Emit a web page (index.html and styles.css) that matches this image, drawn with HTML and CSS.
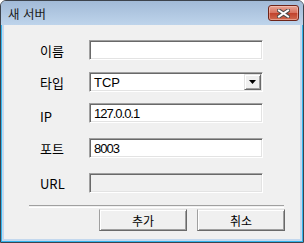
FILE: index.html
```html
<!DOCTYPE html>
<html lang="ko">
<head>
    <meta charset="UTF-8">
    <title>새 서버</title>
    <link rel="stylesheet" href="styles.css">
</head>
<body>

    <!-- Dialog window -->
    <div class="window">
        <div class="titlebar">
            <span class="title">새 서버</span>
            <button class="close-btn">
                <svg width="13" height="9" viewBox="0 0 13 9">
                    <path d="M2 1.5 L11 7.5 M11 1.5 L2 7.5" stroke="#4a4a4a" stroke-width="4" stroke-linecap="square"/>
                    <path d="M2 1.5 L11 7.5 M11 1.5 L2 7.5" stroke="#ffffff" stroke-width="2" stroke-linecap="square"/>
                </svg>
            </button>
        </div>

        <div class="frame">
            <div class="client">
                <div class="form">
                    <div class="row">
                        <label class="label">이름</label>
                        <input class="field" type="text" value="">
                    </div>
                    <div class="row row-type">
                        <label class="label">타입</label>
                        <div class="field select">
                            <span class="select-value">TCP</span>
                            <span class="select-btn">
                                <svg width="7" height="4" viewBox="0 0 7 4"><path d="M0 0 H7 L3.5 4 Z" fill="#000"/></svg>
                            </span>
                        </div>
                    </div>
                    <div class="row row-ip">
                        <label class="label label-low">IP</label>
                        <input class="field num" type="text" value="127.0.0.1">
                    </div>
                    <div class="row row-port">
                        <label class="label">포트</label>
                        <input class="field num" type="text" value="8003">
                    </div>
                    <div class="row row-url">
                        <label class="label">URL</label>
                        <input class="field disabled" type="text" value="" disabled>
                    </div>
                </div>

                <div class="separator"></div>

                <div class="buttons">
                    <button class="btn">추가</button>
                    <button class="btn">취소</button>
                </div>
            </div>
        </div>
    </div>

</body>
</html>
```

FILE: styles.css
```css
body {
    margin: 0;
    padding: 0;
    font-family: "Noto Sans CJK KR", "Liberation Sans", sans-serif;
    font-size: 12px;
    color: #000;
}

/* Window frame */
.window {
    width: 304px;
    height: 243px;
    box-sizing: border-box;
    border: 1px solid #3d434c;
    border-radius: 6px 6px 0 0;
    background: #bdd3ea;
    display: flex;
    flex-direction: column;
    overflow: hidden;
}

.titlebar {
    height: 24px;
    flex-shrink: 0;
    display: flex;
    align-items: flex-start;
    justify-content: space-between;
    padding: 0 4px 0 7px;
    background: linear-gradient(#a2bad7, #bed4eb);
}

.title {
    line-height: 26px;
    font-size: 12.5px;
    color: #1b1b1b;
}

.close-btn {
    width: 31px;
    height: 16px;
    margin-top: 4px;
    padding: 0;
    border: 1px solid #6e2418;
    border-radius: 3px;
    background: linear-gradient(#e8a595, #d7705c 50%, #c0412b 51%, #d06a4f);
    box-shadow: inset 0 0 0 1px rgba(255, 220, 210, 0.45);
    display: flex;
    align-items: center;
    justify-content: center;
}

.frame {
    flex-grow: 1;
    border: 1px solid #33b4ec;
    border-top: none;
    padding: 0 2px 2px;
    background: #c3d8ee;
    display: flex;
}

/* Client area */
.client {
    flex-grow: 1;
    background: #f0f0f0;
    padding-top: 15px;
}

.form {
    padding-left: 36px;
}

.row {
    display: flex;
    align-items: center;
    height: 20px;
}

.row-type { margin-top: 12px; }
.row-ip { margin-top: 11px; }
.row-port { margin-top: 15px; }
.row-url { margin-top: 15px; }

.label {
    width: 49px;
    padding-top: 1px;
    font-size: 13px;
}

.label-low {
    padding-top: 6px;
}

/* Sunken fields */
.field {
    width: 174px;
    height: 20px;
    box-sizing: border-box;
    margin: 0;
    padding: 0 3px;
    border: 1px solid;
    border-color: #a0a0a0 #ffffff #ffffff #a0a0a0;
    box-shadow: inset 1px 1px #696969, inset -1px -1px #e3e3e3;
    background: #fff;
    font-family: "Liberation Sans", sans-serif;
    font-size: 13px;
    outline: none;
}

.num {
    font-size: 13px;
    letter-spacing: -1px;
    padding-left: 4px;
}

.disabled {
    background: #f0f0f0;
}

.select {
    display: flex;
    align-items: center;
    justify-content: space-between;
    padding: 0 1px 0 4px;
}

.select-btn {
    width: 17px;
    height: 16px;
    box-sizing: border-box;
    border: 1px solid;
    border-color: #e3e3e3 #696969 #696969 #e3e3e3;
    box-shadow: inset 1px 1px #fff, inset -1px -1px #a0a0a0;
    background: #f0f0f0;
    display: flex;
    align-items: center;
    justify-content: center;
}

/* Separator + buttons */
.separator {
    height: 1px;
    margin: 12px 16px 0 25px;
    border-top: 1px solid #a0a0a0;
    border-bottom: 1px solid #fff;
}

.buttons {
    display: flex;
    justify-content: flex-end;
    gap: 10px;
    padding-right: 15px;
    margin-top: 1px;
}

.btn {
    width: 88px;
    height: 22px;
    padding: 0;
    border: 1px solid;
    border-color: #e3e3e3 #696969 #696969 #a0a0a0;
    box-shadow: inset 1px 1px #fff, inset -1px -1px #a0a0a0;
    background: #f0f0f0;
    font-family: "Noto Sans CJK KR", sans-serif;
    font-size: 12px;
    color: #000;
}
```
